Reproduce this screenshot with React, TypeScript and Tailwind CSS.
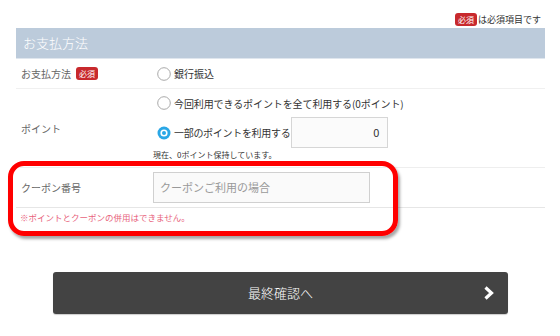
import React from "react";

const font = { fontFamily: "'Noto Sans CJK JP', 'Noto Sans', sans-serif" };

function Badge({ className = "" }: { className?: string }) {
  return (
    <span
      className={`inline-flex items-center justify-center w-[22px] h-[13px] rounded-[3px] bg-[#c8292d] text-white text-[8px] leading-none ${className}`}
    >
      必須
    </span>
  );
}

function Radio({ checked = false }: { checked?: boolean }) {
  return (
    <svg width="14" height="14" viewBox="0 0 14 14" className="shrink-0">
      {checked ? (
        <>
          <circle cx="7" cy="7" r="6.5" fill="#2aa7e6" />
          <circle cx="7" cy="7" r="3.6" fill="#ffffff" />
          <circle cx="7" cy="7" r="2" fill="#2aa7e6" />
        </>
      ) : (
        <circle cx="7" cy="7" r="6.3" fill="#fff" stroke="#a9a9a9" strokeWidth="1" />
      )}
    </svg>
  );
}

export default function App() {
  return (
    <div className="relative w-[560px] h-[336px] bg-white overflow-hidden text-[#333]" style={font}>
      {/* top legend */}
      <div className="h-[28px] flex items-end justify-end pr-[19px] pb-[2px]">
        <Badge />
        <span className="ml-[1px] text-[9px] leading-[13px] text-[#333]">は必須項目です</span>
      </div>

      <div className="ml-[16px] w-[529px]">
        {/* header */}
        <div className="h-[31px] bg-[#bccbdb] flex items-center pl-[7px] text-white text-[13px] font-light border-b border-[#dfe6ee]">
          お支払方法
        </div>

        {/* payment row */}
        <div className="h-[30px] flex items-center border-b border-[#f0f0f0]">
          <div className="w-[137px] pl-[5px] flex items-center text-[10px] text-[#666]">
            お支払方法
            <Badge className="ml-[5px]" />
          </div>
          <div className="flex items-center pl-[4px]">
            <Radio />
            <span className="ml-[3px] text-[10px]">銀行振込</span>
          </div>
        </div>

        {/* point row */}
        <div className="h-[79px] flex items-center border-b border-[#eeeeee]">
          <div className="w-[137px] pl-[5px] text-[10px] text-[#666]">ポイント</div>
          <div className="flex flex-col h-full">
            <div className="h-[28px] flex items-center pl-[4px]">
              <Radio />
              <span className="ml-[3px] text-[10px] tracking-[-0.1px]">今回利用できるポイントを全て利用する(0ポイント)</span>
            </div>
            <div className="h-[31px] flex items-center pl-[4px]">
              <Radio checked />
              <span className="ml-[3px] text-[10px] tracking-[-0.3px]">一部のポイントを利用する</span>
              <div className="ml-[1px] w-[97px] h-[31px] border border-[#d6d6d6] bg-[#fbfbfb] flex items-center justify-end pr-[8px] text-[11px]">
                0
              </div>
            </div>
            <div className="h-[13px] flex items-center text-[8px] text-[#333]">現在、0ポイント保持しています。</div>
          </div>
        </div>

        {/* coupon row */}
        <div className="h-[40px] flex items-center border-b border-[#e6e6e6]">
          <div className="w-[137px] pl-[5px] text-[10px] text-[#666]">クーポン番号</div>
          <div className="w-[217px] h-[31px] border border-[#d0d0d0] bg-[#fafafa] flex items-center pl-[6px] text-[11px] text-[#999]">
            クーポンご利用の場合
          </div>
        </div>

        {/* note */}
        <div className="h-[18px] flex items-center pl-[4px] text-[8.5px] text-[#e8637c]">
          ※ポイントとクーポンの併用はできません。
        </div>
      </div>

      {/* button */}
      <div className="mt-[46px] ml-[53px] w-[455px] h-[42px] rounded-[3px] bg-[#434343] relative flex items-center justify-center text-white text-[13px] font-light shadow-[0_1px_1px_rgba(0,0,0,0.2)]">
        最終確認へ
        <svg width="12" height="14" viewBox="0 0 12 14" className="absolute top-[14px]" style={{ left: 430 }}>
          <path d="M2.5 1.5 L8.5 7 L2.5 12.5" fill="none" stroke="#fff" strokeWidth="3.2" strokeLinejoin="miter" />
        </svg>
      </div>

      {/* red annotation */}
      <div className="absolute left-[8px] top-[161px] w-[390px] h-[75px] border-[5px] border-[#ff0000] rounded-[16px] shadow-[2px_3px_3px_rgba(0,0,0,0.35)]" />
    </div>
  );
}
